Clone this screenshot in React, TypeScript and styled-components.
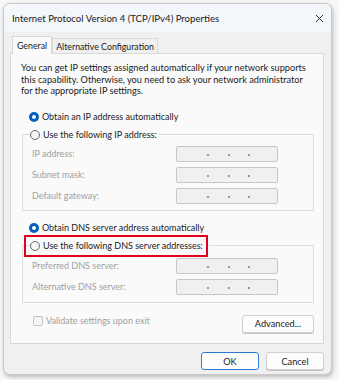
import styled, { createGlobalStyle } from "styled-components";

const GlobalStyle = createGlobalStyle`
  html, body {
    margin: 0;
    padding: 0;
    background: #f7f7f7;
  }
  body {
    font-family: Lato, "Noto Sans", sans-serif;
    color: #1a1a1a;
  }
`;

type FieldRow = { label: string };

const ipRows: FieldRow[] = [
  { label: "IP address:" },
  { label: "Subnet mask:" },
  { label: "Default gateway:" },
];

const dnsRows: FieldRow[] = [
  { label: "Preferred DNS server:" },
  { label: "Alternative DNS server:" },
];

const introLines = [
  "You can get IP settings assigned automatically if your network supports",
  "this capability. Otherwise, you need to ask your network administrator",
  "for the appropriate IP settings.",
];

const IpBox = () => (
  <IpField>
    <Segment />
    <Dot />
    <Segment />
    <Dot />
    <Segment />
    <Dot />
    <Segment />
  </IpField>
);

const App = () => {
  return (
    <>
      <GlobalStyle />
      <Page>
        <Window>
          <TitleBar>
            <Title>Internet Protocol Version 4 (TCP/IPv4) Properties</Title>
            <CloseIcon viewBox="0 0 10 10">
              <path d="M1 1 L9 9 M9 1 L1 9" stroke="#1a1a1a" strokeWidth="1" />
            </CloseIcon>
          </TitleBar>
          <Body>
            <Tabs>
              <Tab active>General</Tab>
              <Tab>Alternative Configuration</Tab>
            </Tabs>
            <Panel>
              <Intro>
                {introLines.map((line) => (
                  <IntroLine key={line}>{line}</IntroLine>
                ))}
              </Intro>

              <RadioLine indent>
                <Radio checked />
                Obtain an IP address automatically
              </RadioLine>

              <Group>
                <Legend>
                  <RadioLine>
                    <Radio />
                    Use the following IP address:
                  </RadioLine>
                </Legend>
                <Rows>
                  {ipRows.map((r) => (
                    <Row key={r.label}>
                      <Label>{r.label}</Label>
                      <IpBox />
                    </Row>
                  ))}
                </Rows>
              </Group>

              <RadioLine indent spaced>
                <Radio checked />
                Obtain DNS server address automatically
              </RadioLine>

              <Group dns>
                <Legend>
                  <Highlight>
                    <RadioLine>
                      <Radio />
                      Use the following DNS server addresses:
                    </RadioLine>
                  </Highlight>
                </Legend>
                <Rows>
                  {dnsRows.map((r) => (
                    <Row key={r.label}>
                      <Label>{r.label}</Label>
                      <IpBox />
                    </Row>
                  ))}
                </Rows>
              </Group>

              <Bottom>
                <CheckLine>
                  <Checkbox />
                  Validate settings upon exit
                </CheckLine>
                <Button wide>Advanced...</Button>
              </Bottom>
            </Panel>
            <Footer>
              <Button primary>OK</Button>
              <Button>Cancel</Button>
            </Footer>
          </Body>
        </Window>
      </Page>
    </>
  );
};

export default App;

const Page = styled.div`
  width: 339px;
  height: 380px;
  padding: 3px 0 0 3px;
  box-sizing: border-box;
`;

const Window = styled.div`
  width: 329px;
  height: 372px;
  box-sizing: border-box;
  border: 1px solid #c9c9c9;
  border-radius: 7px;
  background: #f0f0f0;
  box-shadow: 1px 2px 4px rgba(0, 0, 0, 0.25);
  overflow: hidden;
  display: flex;
  flex-direction: column;
`;

const TitleBar = styled.div`
  height: 28px;
  flex-shrink: 0;
  display: flex;
  align-items: center;
  justify-content: space-between;
  padding: 0 7px 0 8px;
  background: #f3f6fb;
`;

const Title = styled.span`
  font-size: 9.6px;
  color: #1a1a1a;
  white-space: nowrap;
`;

const CloseIcon = styled.svg`
  width: 9px;
  height: 9px;
`;

const Body = styled.div`
  flex: 1;
  padding: 3px 7px 0 6px;
  display: flex;
  flex-direction: column;
`;

const Tabs = styled.div`
  display: flex;
  align-items: flex-end;
  height: 18px;
  padding-left: 2px;
`;

const Tab = styled.div<{ active?: boolean }>`
  font-size: 8.8px;
  box-sizing: border-box;
  height: ${(p) => (p.active ? "18px" : "15px")};
  padding: 0 ${(p) => (p.active ? "4px" : "3px")};
  display: flex;
  align-items: center;
  border: 1px solid #d9d9d9;
  border-bottom: none;
  background: ${(p) => (p.active ? "#fafafa" : "#f0f0f0")};
  margin-bottom: ${(p) => (p.active ? "-1px" : "0")};
  position: relative;
  z-index: ${(p) => (p.active ? 1 : 0)};
`;

const Panel = styled.div`
  height: 291px;
  box-sizing: border-box;
  border: 1px solid #d9d9d9;
  background: #fafafa;
  padding: 8px 9px 0 10px;
  display: flex;
  flex-direction: column;
`;

const Intro = styled.div`
  display: flex;
  flex-direction: column;
  font-size: 9.2px;
  line-height: 11.5px;
  color: #1a1a1a;
`;

const IntroLine = styled.span`
  white-space: nowrap;
`;

const RadioLine = styled.div<{ indent?: boolean; spaced?: boolean }>`
  display: flex;
  align-items: center;
  gap: 3px;
  font-size: 9px;
  color: #1a1a1a;
  white-space: nowrap;
  margin-left: ${(p) => (p.indent ? "8px" : "0")};
  margin-top: ${(p) => (p.indent ? (p.spaced ? "10px" : "13px") : "0")};
  height: 14px;
`;

const Radio = styled.span<{ checked?: boolean }>`
  box-sizing: border-box;
  width: 10px;
  height: 10px;
  border-radius: 50%;
  flex-shrink: 0;
  background: ${(p) => (p.checked ? "#ffffff" : "#f5f5f5")};
  border: ${(p) => (p.checked ? "3px solid #005fb8" : "1px solid #6a6a6a")};
`;

const Group = styled.fieldset<{ dns?: boolean }>`
  margin: ${(p) => (p.dns ? "0" : "4px")} 0 0 1px;
  width: 292px;
  box-sizing: border-box;
  border: 1px solid #dcdcdc;
  padding: ${(p) => (p.dns ? "1px" : "4px")} 0 ${(p) => (p.dns ? "7px" : "6px")} 9px;
`;

const Legend = styled.legend`
  padding: 0 1px 0 0;
  margin-left: -2px;
`;

const Highlight = styled.div`
  border: 2px solid #e0001b;
  padding: 2px 3px 2px 4px;
  margin-left: -6px;
`;

const Rows = styled.div`
  display: flex;
  flex-direction: column;
  gap: 5px;
`;

const Row = styled.div`
  display: flex;
  align-items: center;
`;

const Label = styled.span`
  width: 144px;
  font-size: 9px;
  color: #a0a0a0;
`;

const IpField = styled.div`
  width: 102px;
  height: 16px;
  box-sizing: border-box;
  border: 1.5px solid #c6c6c6;
  border-radius: 2px;
  background: #f0f0f0;
  display: flex;
  align-items: center;
  padding: 0 9px 0 12px;
`;

const Segment = styled.span`
  flex: 1;
`;

const Dot = styled.span`
  width: 2px;
  height: 2px;
  margin-top: 3px;
  background: #9a9a9a;
`;

const Bottom = styled.div`
  display: flex;
  align-items: center;
  justify-content: space-between;
  margin: 12px 0 0 12px;
  width: 281px;
`;

const CheckLine = styled.div`
  display: flex;
  align-items: center;
  gap: 3px;
  font-size: 9px;
  color: #a0a0a0;
  margin-top: -6px;
`;

const Checkbox = styled.span`
  box-sizing: border-box;
  width: 10px;
  height: 10px;
  border: 1px solid #c4c4c4;
  border-radius: 2px;
  background: #f5f5f5;
`;

const Button = styled.button<{ primary?: boolean; wide?: boolean }>`
  font-family: Lato, "Noto Sans", sans-serif;
  font-size: 9.2px;
  color: #1a1a1a;
  width: ${(p) => (p.wide ? "72px" : "58px")};
  height: 18px;
  padding: 0;
  box-sizing: border-box;
  border-radius: 3px;
  background: #fdfdfd;
  border: ${(p) => (p.primary ? "1.5px solid #2a7bd4" : "1px solid #d0d0d0")};
  box-shadow: ${(p) => (p.primary ? "none" : "0 1px 0 #c4c4c4")};
`;

const Footer = styled.div`
  display: flex;
  justify-content: flex-end;
  gap: 7px;
  padding-top: 8px;
`;
